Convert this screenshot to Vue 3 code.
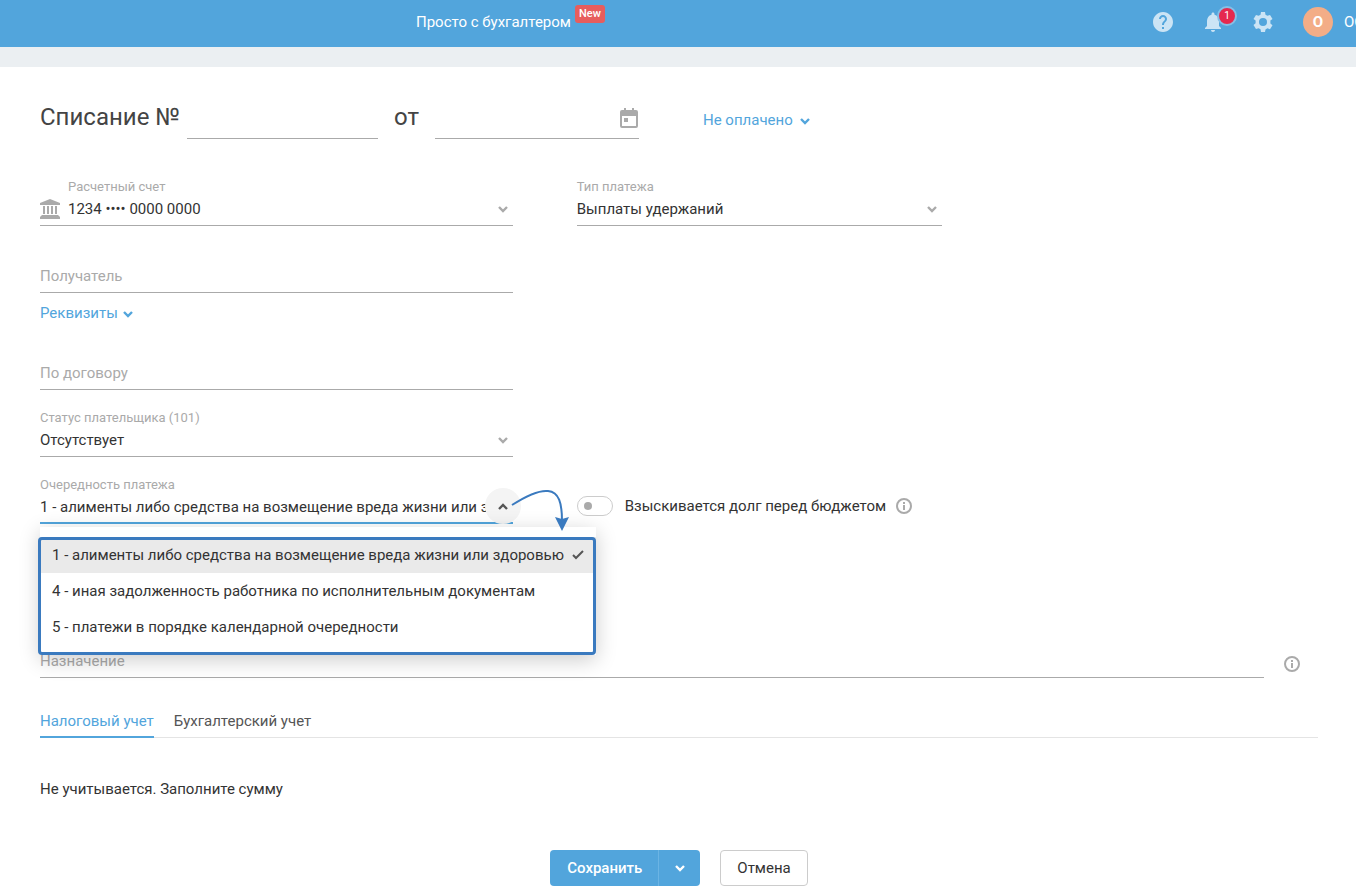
<template>
  <div class="app">
    <header class="header">
      <nav class="header-nav">
        <a href="#" class="nav-link">Просто с бухгалтером</a>
        <span class="nav-badge">New</span>
      </nav>
      <div class="header-tools">
        <button type="button" class="tool" aria-label="Помощь">
          <svg width="24" height="24" viewBox="0 0 24 24" fill="currentColor">
            <path d="M12 2C6.48 2 2 6.48 2 12s4.48 10 10 10 10-4.480 10-10S17.520 2 12 2zm1 17h-2v-2h2v2zm2.070-7.750l-.9.920C13.450 12.900 13 13.500 13 15h-2v-.5c0-1.100.450-2.100 1.170-2.830l1.240-1.260c.370-.360.590-.860.590-1.410 0-1.100-.9-2-2-2s-2 .9-2 2H8c0-2.210 1.790-4 4-4s4 1.790 4 4c0 .880-.360 1.680-.930 2.250z" />
          </svg>
        </button>
        <button type="button" class="tool" aria-label="Уведомления">
          <svg width="24" height="24" viewBox="0 0 24 24" fill="currentColor">
            <path d="M12 22c1.100 0 2-.9 2-2h-4c0 1.100.890 2 2 2zm6-6v-5c0-3.070-1.640-5.640-4.500-6.320V4c0-.830-.670-1.500-1.500-1.500s-1.500.670-1.500 1.500v.680C7.630 5.360 6 7.920 6 11v5l-2 2v1h16v-1l-2-2z" />
          </svg>
          <span class="tool-count">1</span>
        </button>
        <button type="button" class="tool" aria-label="Настройки">
          <svg width="24" height="24" viewBox="0 0 24 24" fill="currentColor" fill-rule="evenodd">
            <path d="M10 2h4l.5 2.700 1.900 1.100 2.600-.9 2.500 4-2.100 1.700v2.800l2.100 1.800-2.500 4-2.600-.9-1.900 1.100L14 22h-4l-.5-2.700-1.900-1.100-2.600.9-2.500-4 2.100-1.800v-2.800L2.500 8.900l2.500-4 2.600.9 1.900-1.100zM12 8a4 4 0 1 0 0 8 4 4 0 0 0 0-8z" />
          </svg>
        </button>
        <button type="button" class="user">
          <span class="avatar">О</span>
          <span class="user-name">ОО</span>
        </button>
      </div>
    </header>

    <main class="page">
      <form class="form" @submit.prevent>
        <div class="title-row">
          <label class="title" for="number">Списание №</label>
          <input id="number" v-model="form.number" class="line-input number-input" type="text">
          <label class="title title-from" for="date">от</label>
          <div class="date-input">
            <input id="date" v-model="form.date" class="line-input" type="text">
            <svg class="calendar" width="18" height="20" viewBox="0 0 18 20" fill="currentColor" fill-rule="evenodd">
              <path d="M4 0h2v2h6V0h2v2h2a2 2 0 0 1 2 2v14a2 2 0 0 1-2 2H2a2 2 0 0 1-2-2V4a2 2 0 0 1 2-2h2zM2 8v10h14V8zM4 10h4v4H4z" />
            </svg>
          </div>
          <button type="button" class="link status">
            Не оплачено
            <svg class="chevron" viewBox="0 0 10 7"><path d="M1 1l4 4 4-4" /></svg>
          </button>
        </div>

        <div class="grid first-row">
          <div class="field with-icon">
            <svg class="bank" width="20" height="20" viewBox="0 0 20 20" fill="currentColor">
              <path d="M10 0l10 4v2H0V4zM3 7h2v8H3zM7 7h2v8H7zM11 7h2v8h-2zM15 7h2v8h-2zM2 16h16l2 2v2H0v-2z" />
            </svg>
            <label for="account">Расчетный счет</label>
            <select id="account" v-model="form.account">
              <option>1234 •••• 0000 0000</option>
            </select>
            <svg class="chevron field-chevron" viewBox="0 0 10 7"><path d="M1 1l4 4 4-4" /></svg>
          </div>
          <div class="field">
            <label for="type">Тип платежа</label>
            <select id="type" v-model="form.type">
              <option>Выплаты удержаний</option>
            </select>
            <svg class="chevron field-chevron" viewBox="0 0 10 7"><path d="M1 1l4 4 4-4" /></svg>
          </div>
        </div>

        <div class="grid">
          <div>
            <div class="field">
              <input v-model="form.recipient" type="text" placeholder="Получатель" aria-label="Получатель">
            </div>
            <button type="button" class="link requisites">
              Реквизиты
              <svg class="chevron" viewBox="0 0 10 7"><path d="M1 1l4 4 4-4" /></svg>
            </button>
          </div>
        </div>

        <div class="grid">
          <div class="field">
            <input v-model="form.contract" type="text" placeholder="По договору" aria-label="По договору">
          </div>
        </div>

        <div class="grid">
          <div class="field">
            <label for="payer">Статус плательщика (101)</label>
            <select id="payer" v-model="form.payer">
              <option>Отсутствует</option>
            </select>
            <svg class="chevron field-chevron" viewBox="0 0 10 7"><path d="M1 1l4 4 4-4" /></svg>
          </div>
        </div>

        <div class="grid">
          <div class="field" :class="{ active: isOpen }">
            <label for="order">Очередность платежа</label>
            <select id="order" v-model="form.order" @mousedown.prevent="toggleMenu">
              <option v-for="item in orders" :key="item" :value="item">{{ item }}</option>
            </select>
            <button type="button" class="toggle-menu" aria-label="Очередность платежа" @click="toggleMenu">
              <svg class="chevron" viewBox="0 0 10 7"><path d="M1 6l4-4 4 4" /></svg>
            </button>
            <div v-if="isOpen" class="menu" role="listbox">
              <button
                v-for="item in orders"
                :key="item"
                type="button"
                role="option"
                class="menu-item"
                :class="{ selected: item === form.order }"
                :aria-selected="item === form.order"
                @click="selectOrder(item)"
              >
                {{ item }}
                <svg v-if="item === form.order" class="check" width="12" height="10" viewBox="0 0 12 10">
                  <path d="M1 5l3 3 7-7" />
                </svg>
              </button>
              <div class="menu-frame"></div>
            </div>
            <svg v-if="isOpen" class="arrow" width="64" height="46" viewBox="0 0 64 46">
              <path class="arrow-line" d="M3 20C17 11 30 5 39 6c11 1 14 12 14 30" />
              <path class="arrow-head" d="M46 32l7 2 7-2-7 14z" />
            </svg>
          </div>
          <div class="debt">
            <input id="debt" v-model="form.debt" class="switch" type="checkbox">
            <label for="debt">Взыскивается долг перед бюджетом</label>
            <svg class="info" width="16" height="16" viewBox="0 0 16 16">
              <circle cx="8" cy="8" r="7" />
              <path d="M8 4v2M8 7v5" />
            </svg>
          </div>
        </div>

        <div class="purpose">
          <div class="field">
            <input v-model="form.purpose" type="text" placeholder="Назначение" aria-label="Назначение">
          </div>
          <svg class="info" width="16" height="16" viewBox="0 0 16 16">
            <circle cx="8" cy="8" r="7" />
            <path d="M8 4v2M8 7v5" />
          </svg>
        </div>

        <div class="tabs" role="tablist">
          <button
            v-for="tab in tabs"
            :key="tab"
            type="button"
            role="tab"
            class="tab"
            :class="{ active: tab === activeTab }"
            :aria-selected="tab === activeTab"
            @click="activeTab = tab"
          >{{ tab }}</button>
        </div>
        <p class="note">Не учитывается. Заполните сумму</p>

        <div class="actions">
          <div class="save-group">
            <button type="submit" class="save">Сохранить</button>
            <button type="button" class="save-more" aria-label="Сохранить">
              <svg class="chevron" viewBox="0 0 10 7"><path d="M1 1l4 4 4-4" /></svg>
            </button>
          </div>
          <button type="button" class="cancel">Отмена</button>
        </div>
      </form>
    </main>
  </div>
</template>

<script setup>
import { ref, reactive } from 'vue';

const orders = [
  '1 - алименты либо средства на возмещение вреда жизни или здоровью',
  '4 - иная задолженность работника по исполнительным документам',
  '5 - платежи в порядке календарной очередности'
];

const tabs = ['Налоговый учет', 'Бухгалтерский учет'];
const activeTab = ref(tabs[0]);
const isOpen = ref(true);

const form = reactive({
  number: '',
  date: '',
  account: '1234 •••• 0000 0000',
  type: 'Выплаты удержаний',
  recipient: '',
  contract: '',
  payer: 'Отсутствует',
  order: orders[0],
  debt: false,
  purpose: ''
});

const toggleMenu = () => {
  isOpen.value = !isOpen.value;
};

const selectOrder = (item) => {
  form.order = item;
  isOpen.value = false;
};
</script>

<style>
body {
  margin: 0;
  background: #fff;
}
</style>

<style scoped>
.app {
  font-family: Roboto, sans-serif;
  font-size: 15px;
  line-height: 24px;
  color: #333;
}
.app * {
  box-sizing: border-box;
}
button, input, select {
  margin: 0;
  padding: 0;
  border: 0;
  border-radius: 0;
  outline: 0;
  background: none;
  font: inherit;
  color: inherit;
}
button {
  cursor: pointer;
}
svg {
  flex: none;
}

.header {
  display: flex;
  justify-content: space-between;
  height: 47px;
  padding-left: 416px;
  background: #52a5dc;
  overflow: hidden;
}
.header-nav {
  display: flex;
  align-items: flex-start;
  gap: 4px;
}
.nav-link {
  margin-top: 10px;
  color: #fff;
  text-decoration: none;
}
.nav-badge {
  margin-top: 5px;
  padding: 0 4px;
  border-radius: 3px;
  background: #e75d5d;
  color: #fff;
  font-size: 11px;
  font-weight: 500;
  line-height: 18px;
}
.header-tools {
  display: flex;
  align-items: center;
  height: 44px;
}
.tool {
  position: relative;
  display: flex;
  margin-right: 26px;
  color: #cbe4f5;
}
.tool-count {
  position: absolute;
  top: -4px;
  right: -12px;
  width: 20px;
  height: 20px;
  border: 2px solid #86bfe6;
  border-radius: 50%;
  background: #e5294f;
  color: #fff;
  font-size: 10px;
  line-height: 16px;
  text-align: center;
}
.user {
  display: flex;
  align-items: center;
  gap: 11px;
  width: 53px;
  margin-left: 2px;
  overflow: hidden;
  color: #fff;
}
.avatar {
  flex: none;
  width: 30px;
  height: 30px;
  border-radius: 50%;
  background: #f3ad87;
  font-weight: 700;
  line-height: 30px;
  text-align: center;
}

.page {
  padding: 20px 38px 0 40px;
  border-top: 20px solid #ebeff2;
}
.title-row {
  display: flex;
  align-items: flex-end;
  height: 52px;
}
.title {
  padding-bottom: 6px;
  color: #444;
  font-size: 24px;
  line-height: 32px;
}
.title-from {
  margin: 0 16px;
}
.line-input {
  width: 100%;
  height: 42px;
  border-bottom: 1px solid #aaa;
}
.number-input {
  width: 191px;
  margin-left: 7px;
}
.date-input {
  position: relative;
  width: 204px;
}
.date-input .line-input {
  display: block;
}
.calendar {
  position: absolute;
  top: 11px;
  right: 1px;
  color: #aaa;
}
.link {
  display: flex;
  align-items: center;
  gap: 5px;
  color: #52a5dc;
  line-height: 20px;
}
.status {
  gap: 7px;
  margin: 0 0 9px 64px;
}
.chevron {
  width: 10px;
  height: 7px;
  fill: none;
  stroke: currentColor;
  stroke-width: 2.4;
}
.link .chevron {
  margin-top: 3px;
}

.grid {
  display: grid;
  grid-template-columns: 37% 28.6%;
  column-gap: 5%;
}
.first-row {
  margin-top: 20px;
}
.field {
  position: relative;
  display: flex;
  flex-direction: column;
  justify-content: flex-end;
  height: 47px;
  margin-top: 20px;
  padding-bottom: 4px;
  border-bottom: 1px solid #aaa;
}
.field label {
  margin-bottom: 2px;
  color: #aaa;
  font-size: 13px;
  line-height: 16px;
}
.field input, .field select {
  width: 100%;
  height: 24px;
  line-height: 24px;
}
.field select {
  appearance: none;
  padding-right: 27px;
}
.field input::placeholder {
  color: #aaa;
  opacity: 1;
}
.field.active {
  padding-bottom: 3px;
  border-bottom: 2px solid #52a5dc;
}
.with-icon {
  padding-left: 28px;
}
.bank {
  position: absolute;
  left: 0;
  bottom: 6px;
  color: #aaa;
}
.field-chevron {
  position: absolute;
  right: 5px;
  bottom: 12px;
  color: #aaa;
  pointer-events: none;
}
.requisites {
  margin-top: 10px;
}

.toggle-menu {
  position: absolute;
  right: -8px;
  bottom: -2px;
  display: flex;
  align-items: center;
  justify-content: center;
  width: 36px;
  height: 36px;
  border-radius: 50%;
  background: #f4f4f4;
  color: #555;
}
.menu {
  position: absolute;
  z-index: 2;
  top: 50px;
  left: 0;
  padding: 10px 0;
  background: #fff;
  box-shadow: 0 5px 20px rgba(0, 0, 0, 0.2);
}
.menu-item {
  display: flex;
  align-items: center;
  gap: 8px;
  width: 100%;
  height: 36px;
  padding: 0 12px;
  white-space: nowrap;
}
.menu-item.selected {
  background: #eaeaea;
}
.check {
  fill: none;
  stroke: #555;
  stroke-width: 2;
}
.menu-frame {
  position: absolute;
  inset: 10px 0 0 -2px;
  border: 3px solid #3a7abf;
  border-radius: 4px;
  pointer-events: none;
}
.arrow {
  position: absolute;
  z-index: 3;
  top: 8px;
  right: -60px;
  pointer-events: none;
}
.arrow-line {
  fill: none;
  stroke: #3a7abf;
  stroke-width: 2;
}
.arrow-head {
  fill: #3a7abf;
}

.debt {
  display: flex;
  align-items: center;
  align-self: end;
  height: 24px;
  margin-bottom: 6px;
  white-space: nowrap;
}
.debt label {
  margin: 0 10px 0 12px;
}
.switch {
  flex: none;
  appearance: none;
  width: 36px;
  height: 20px;
  border: 1px solid #ccc;
  border-radius: 10px;
}
.switch::before {
  content: '';
  display: block;
  width: 8px;
  height: 8px;
  margin: 5px 6px;
  border-radius: 50%;
  background: #aaa;
}
.switch:checked::before {
  margin-left: 20px;
}
.info {
  fill: none;
  stroke: #aaa;
  stroke-width: 2;
}
.purpose {
  display: flex;
  align-items: flex-end;
  gap: 20px;
  margin-top: 87px;
  padding-right: 18px;
}
.purpose .field {
  flex: 1;
}
.purpose .info {
  margin-bottom: 6px;
}

.tabs {
  display: flex;
  gap: 20px;
  height: 34px;
  margin-top: 26px;
  border-bottom: 1px solid #e4e4e4;
}
.tab {
  height: 34px;
  padding-top: 2px;
  border-bottom: 2px solid transparent;
  color: #555;
}
.tab.active {
  border-color: #52a5dc;
  color: #52a5dc;
}
.note {
  margin: 39px 0 0;
}
.actions {
  display: flex;
  justify-content: center;
  gap: 20px;
  margin-top: 49px;
}
.save-group {
  display: flex;
  height: 36px;
  border-radius: 4px;
  background: #52a5dc;
  color: #fff;
  overflow: hidden;
}
.save {
  padding: 0 16px 0 17px;
  font-weight: 500;
}
.save-more {
  display: flex;
  align-items: center;
  justify-content: center;
  width: 42px;
  border-left: 1px solid #6bb4e4;
}
.cancel {
  padding: 0 16px;
  border: 1px solid #ccc;
  border-radius: 4px;
}
</style>
